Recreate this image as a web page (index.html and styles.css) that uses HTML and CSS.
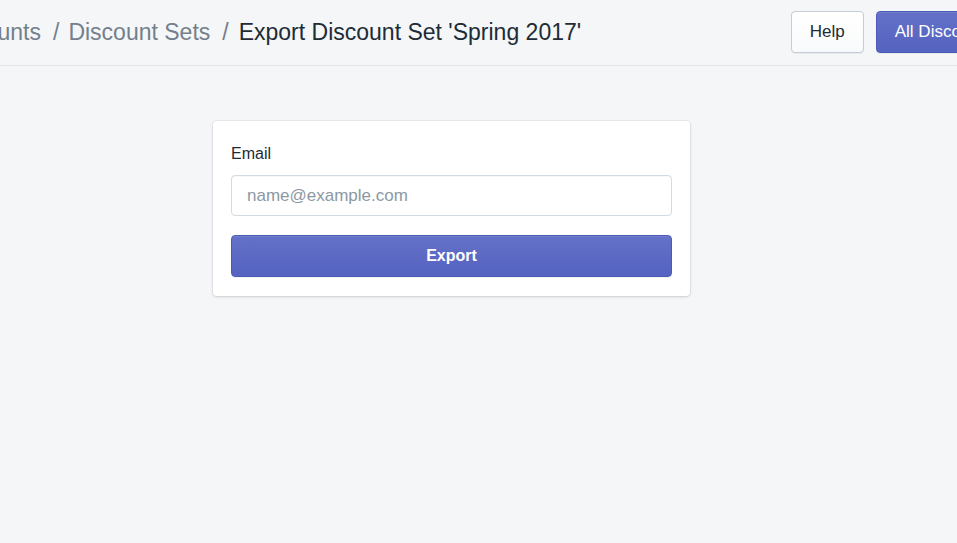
FILE: index.html
```html
<!DOCTYPE html>
<html lang="en">
<head>
<meta charset="utf-8">
<title>Export Discount Set</title>
<link rel="stylesheet" href="styles.css">
</head>
<body>
<header class="topbar">
  <nav class="crumbs">
    <a class="crumb" href="#">Discounts</a>
    <span class="sep">/</span>
    <a class="crumb" href="#">Discount Sets</a>
    <span class="sep">/</span>
    <h1 class="title">Export Discount Set 'Spring 2017'</h1>
  </nav>
  <div class="actions">
    <button class="btn btn-plain" type="button">Help</button>
    <button class="btn btn-primary" type="button">All Discounts</button>
  </div>
</header>
<main class="content">
  <form class="card">
    <label class="label" for="email">Email</label>
    <input class="input" id="email" type="email" placeholder="name@example.com">
    <button class="btn btn-primary btn-full" type="button">Export</button>
  </form>
</main>
</body>
</html>
```
FILE: styles.css
```css
* { box-sizing: border-box; }
html, body { margin: 0; padding: 0; }
body {
  background: #f4f6f8;
  font-family: "Liberation Sans", Arial, sans-serif;
  color: #212b36;
  overflow: hidden;
  width: 957px;
  height: 543px;
}
.topbar {
  display: flex;
  align-items: center;
  height: 66px;
  padding: 10px 0 12px;
  border-bottom: 1px solid #e3e6e9;
}
.crumbs {
  display: flex;
  align-items: baseline;
  margin-left: -60px;
  margin-top: 2px;
  font-size: 23px;
  white-space: nowrap;
}
.crumb {
  color: #737f8c;
  text-decoration: none;
}
.sep {
  color: #737f8c;
  margin: 0 9px 0 12px;
}
.title {
  margin: 0 0 0 1px;
  font-size: 23px;
  font-weight: normal;
  color: #212b36;
}
.actions {
  display: flex;
  gap: 12px;
  margin-left: auto;
  margin-right: -55px;
  flex-shrink: 0;
}
.btn {
  font-family: inherit;
  font-size: 17px;
  height: 42px;
  padding: 0 18px;
  border-radius: 4px;
  cursor: pointer;
  white-space: nowrap;
}
.btn-plain {
  background: linear-gradient(180deg, #ffffff, #f9fafb);
  border: 1px solid #c4cdd5;
  color: #212b36;
  box-shadow: 0 1px 0 rgba(22,29,37,.05);
}
.btn-primary {
  background: linear-gradient(180deg, #6371c7, #5563c1);
  border: 1px solid #4b59b8;
  color: #ffffff;
  box-shadow: inset 0 1px 0 rgba(255,255,255,.1), 0 1px 0 rgba(22,29,37,.05);
}
.content {
  padding: 55px 0 0 213px;
}
.card {
  width: 477px;
  background: #ffffff;
  border-radius: 4px;
  box-shadow: 0 0 0 1px rgba(63,63,68,.05), 0 1px 3px 0 rgba(63,63,68,.18);
  padding: 23px 18px 19px;
  display: flex;
  flex-direction: column;
}
.label {
  font-size: 16px;
  line-height: 20px;
  color: #212b36;
  margin-bottom: 11px;
}
.input {
  font-family: inherit;
  font-size: 17px;
  height: 41px;
  padding: 0 15px;
  border: 1px solid #d3dbe2;
  border-radius: 4px;
  color: #212b36;
  margin-bottom: 19px;
  box-shadow: inset 0 1px 0 rgba(99,115,129,.05);
}
.input::placeholder { color: #8c98a4; }
.btn-full {
  width: 100%;
  height: 42px;
  font-size: 16px;
  font-weight: bold;
}
```
